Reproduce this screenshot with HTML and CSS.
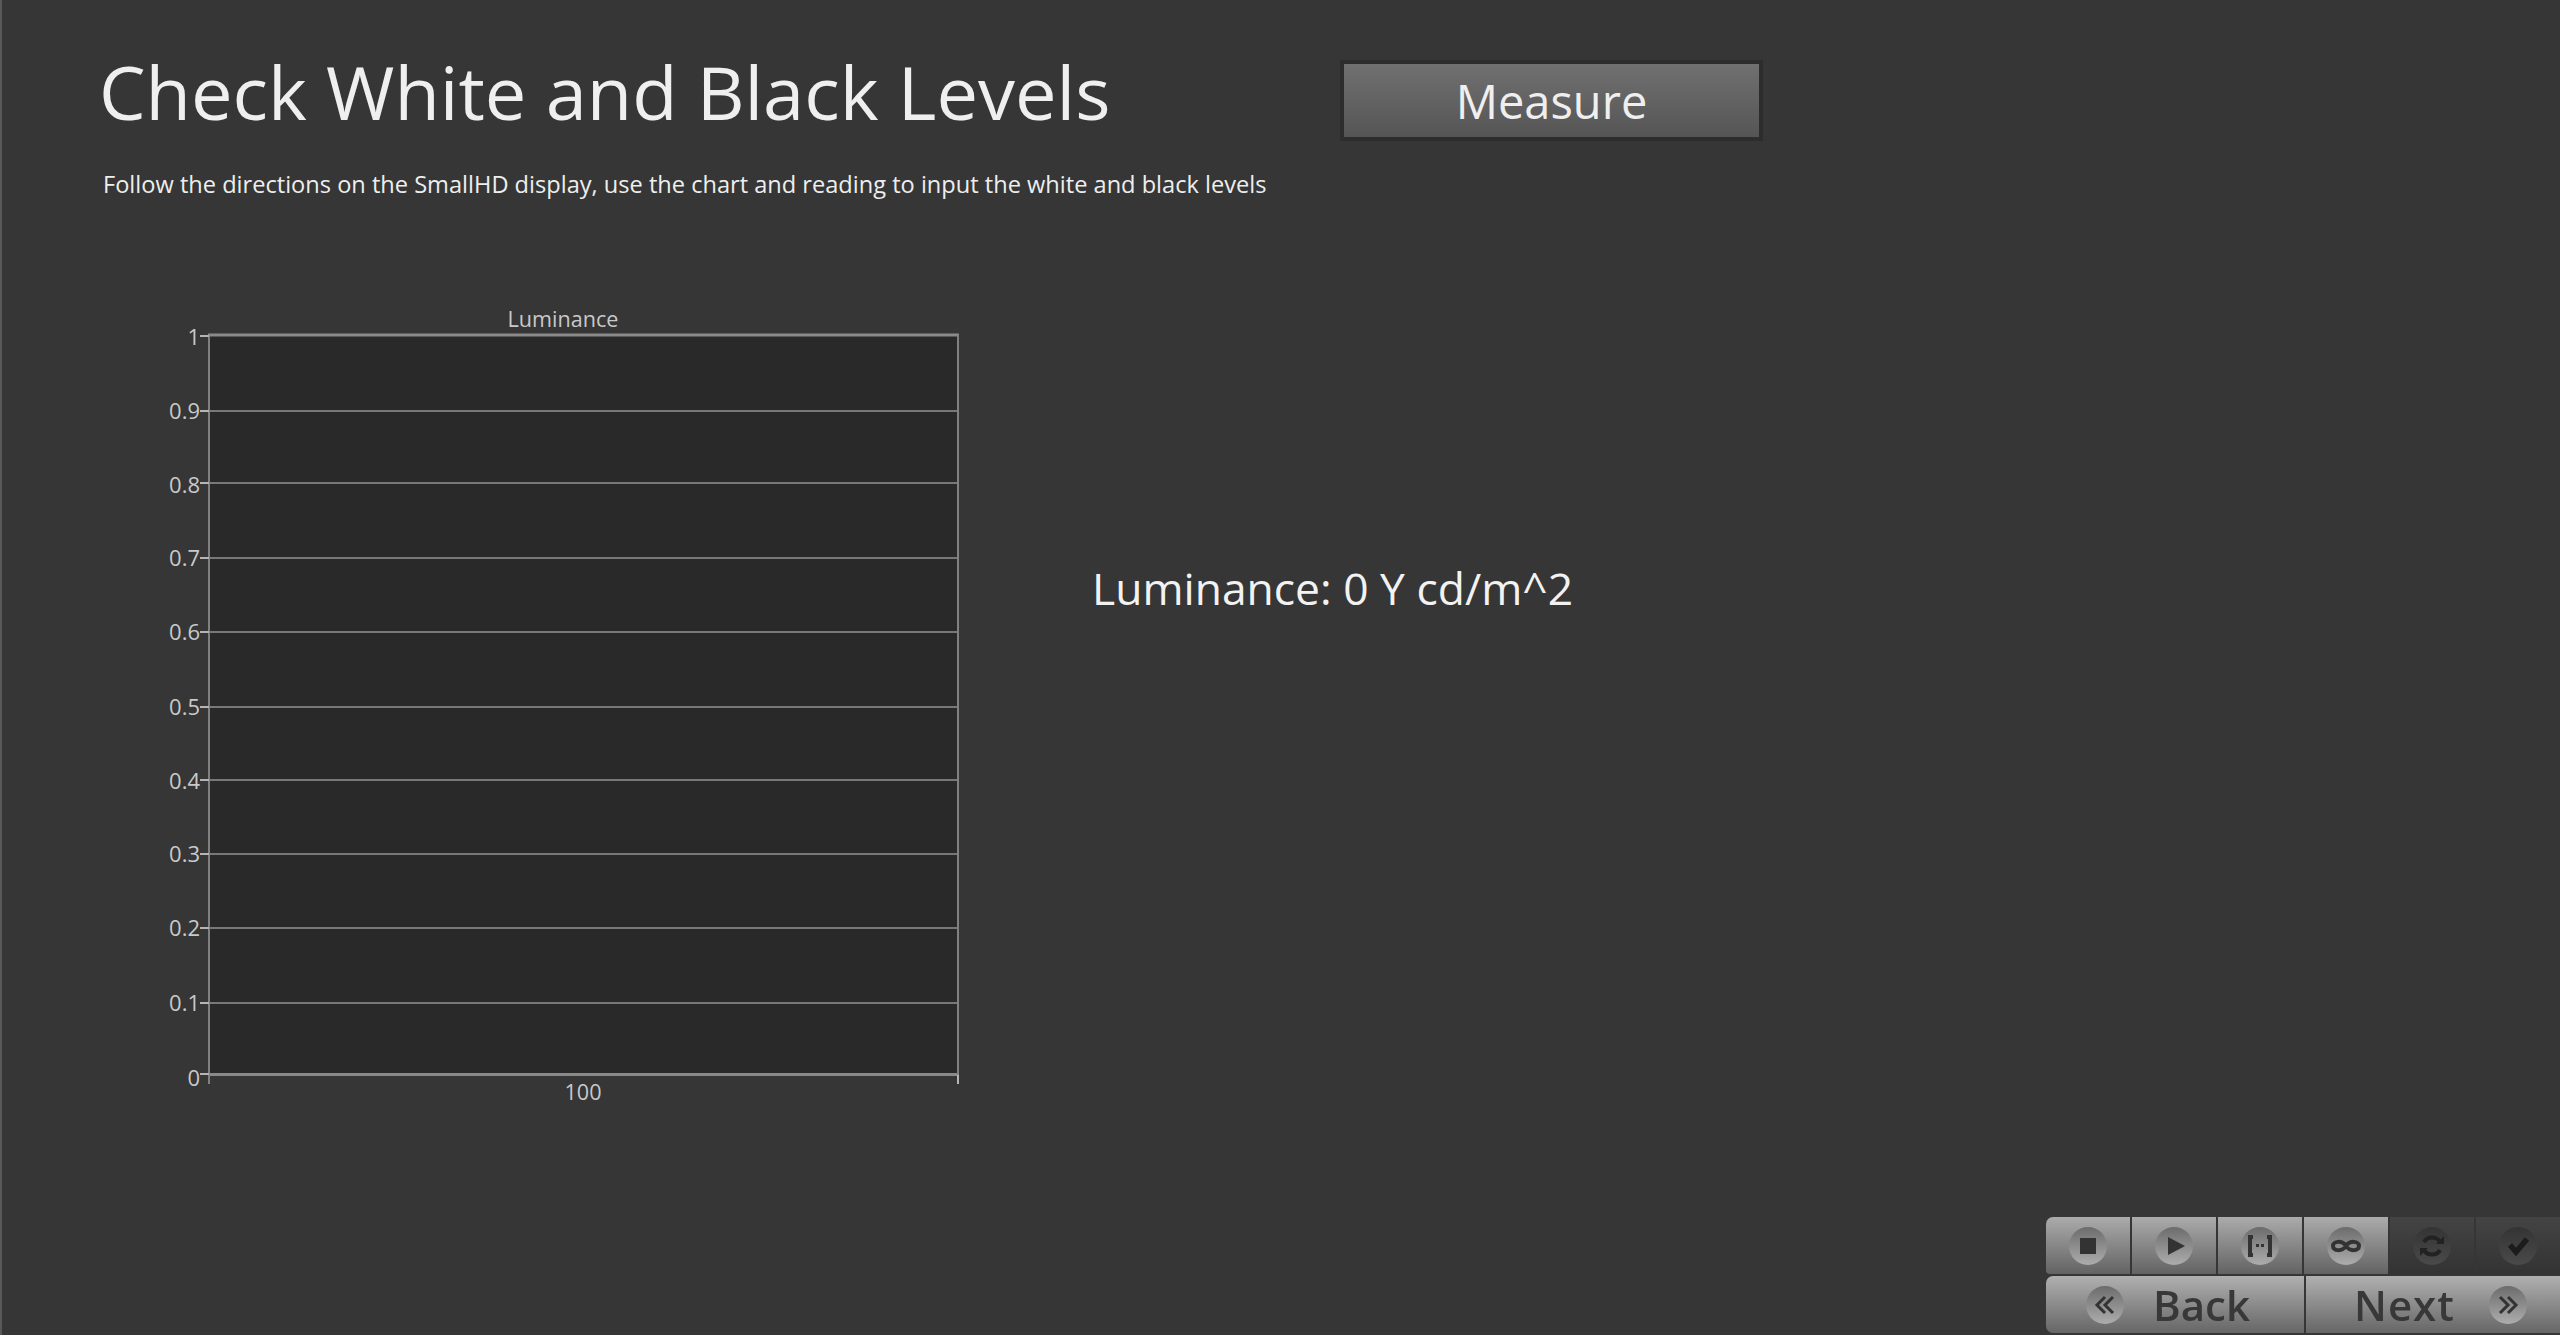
FILE: index.html
```html
<!DOCTYPE html>
<html lang="en">
<head>
<meta charset="utf-8">
<title>Check White and Black Levels</title>
<link rel="stylesheet" href="styles.css">
</head>
<body>
<main class="page">
  <header class="head">
    <h1 class="title">Check White and Black Levels</h1>
    <button class="measure" type="button">Measure</button>
  </header>
  <p class="desc">Follow the directions on the SmallHD display, use the chart and reading to input the white and black levels</p>
  <section class="content">
    <svg class="chart" viewBox="140 300 840 820" width="840" height="820" aria-label="Luminance chart">
      <rect class="plot" x="209" y="335" width="749" height="739"/>
      <g class="grid">
        <line x1="209" x2="958" y1="411" y2="411"/>
        <line x1="209" x2="958" y1="483" y2="483"/>
        <line x1="209" x2="958" y1="558" y2="558"/>
        <line x1="209" x2="958" y1="632" y2="632"/>
        <line x1="209" x2="958" y1="707" y2="707"/>
        <line x1="209" x2="958" y1="780" y2="780"/>
        <line x1="209" x2="958" y1="854" y2="854"/>
        <line x1="209" x2="958" y1="928" y2="928"/>
        <line x1="209" x2="958" y1="1003" y2="1003"/>
      </g>
      <g class="frame">
        <line class="thick" x1="208" x2="959" y1="335" y2="335"/>
        <line class="thick" x1="208" x2="959" y1="1074.5" y2="1074.5"/>
        <line x1="209" x2="209" y1="335" y2="1084"/>
        <line x1="958" x2="958" y1="335" y2="1074"/>
      </g>
      <g class="ticks">
        <line x1="200" x2="209" y1="336" y2="336"/>
        <line x1="200" x2="209" y1="411" y2="411"/>
        <line x1="200" x2="209" y1="483" y2="483"/>
        <line x1="200" x2="209" y1="558" y2="558"/>
        <line x1="200" x2="209" y1="632" y2="632"/>
        <line x1="200" x2="209" y1="707" y2="707"/>
        <line x1="200" x2="209" y1="780" y2="780"/>
        <line x1="200" x2="209" y1="854" y2="854"/>
        <line x1="200" x2="209" y1="928" y2="928"/>
        <line x1="200" x2="209" y1="1003" y2="1003"/>
        <line x1="200" x2="209" y1="1074" y2="1074"/>
        <line x1="958" x2="958" y1="1075" y2="1084"/>
      </g>
      <g class="ylabels">
        <text x="200" y="345">1</text>
        <text x="200" y="419">0.9</text>
        <text x="200" y="493">0.8</text>
        <text x="200" y="566">0.7</text>
        <text x="200" y="640">0.6</text>
        <text x="200" y="715">0.5</text>
        <text x="200" y="789">0.4</text>
        <text x="200" y="862">0.3</text>
        <text x="200" y="936">0.2</text>
        <text x="200" y="1011">0.1</text>
        <text x="200" y="1086">0</text>
      </g>
      <text class="ctitle" x="563" y="327">Luminance</text>
      <text class="ctitle" x="583" y="1100">100</text>
    </svg>
    <p class="reading">Luminance: 0 Y cd/m^2</p>
  </section>
  <nav class="toolbar">
    <div class="row tools">
      <div class="tool"><span class="knob"><svg viewBox="0 0 38 38"><rect x="11" y="11" width="16" height="16"/></svg></span></div>
      <div class="tool"><span class="knob"><svg viewBox="0 0 38 38"><path d="M13 10 L30 19 L13 28 Z"/></svg></span></div>
      <div class="tool"><span class="knob"><svg viewBox="0 0 38 38"><path class="st bold" d="M12 10 H9 V28 H12 M26 10 H29 V28 H26"/><rect x="15" y="17" width="3" height="3"/><rect x="20" y="17" width="3" height="3"/></svg></span></div>
      <div class="tool"><span class="knob"><svg viewBox="0 0 38 38"><path class="st bold" d="M19 19 C15 13 6 14 6 19 C6 24 15 25 19 19 C23 13 32 14 32 19 C32 24 23 25 19 19 Z"/></svg></span></div>
      <div class="tool off"><span class="knob"><svg viewBox="0 0 38 38"><path class="st bold" d="M27 15 C24 9 14 9 11 15 M11 23 C14 29 24 29 27 23"/><path d="M23 17 H31 V9 Z M15 21 H7 V29 Z"/></svg></span></div>
      <div class="tool off"><span class="knob"><svg viewBox="0 0 38 38"><path class="st check" d="M11 18 L17 25 L28 12"/></svg></span></div>
    </div>
    <div class="row navs">
      <a class="nav back"><span class="knob"><svg viewBox="0 0 38 38"><path class="st" d="M19 11 L11 19 L19 27 M27 11 L19 19 L27 27"/></svg></span>Back</a>
      <a class="nav next"><span class="next-label">Next</span><span class="knob"><svg viewBox="0 0 38 38"><path class="st" d="M11 11 L19 19 L11 27 M19 11 L27 19 L19 27"/></svg></span></a>
    </div>
  </nav>
</main>
</body>
</html>
```
FILE: styles.css
```css
* { box-sizing: border-box; }
html, body { margin: 0; padding: 0; }
body { background: #363636; font-family: "Open Sans", "Noto Sans", sans-serif; }
.page {
  width: 2560px;
  height: 1335px;
  overflow: hidden;
  border-left: 2px solid #585858;
  display: flex;
  flex-direction: column;
  color: #efefef;
}
.head { display: flex; align-items: flex-start; padding: 42px 0 0 97px; height: 140px; }
.title {
  flex: none;
  margin: 0;
  width: 1241px;
  font-size: 74px;
  line-height: 100px;
  font-weight: 400;
  color: #efefef;
}
.measure {
  margin-top: 18px;
  width: 423px;
  height: 81px;
  border: 4px solid #2d2d2d;
  background: linear-gradient(#707070, #555555);
  color: #efefef;
  font: 400 47px/70px "Open Sans", sans-serif;
  padding: 0;
}
.desc { margin: 26px 0 0 101px; height: 36px; font-size: 23.6px; line-height: 36px; color: #eeeeee; }
.content { display: flex; align-items: flex-start; padding: 0 0 0 138px; margin-top: 98px; height: 820px; }
.chart { flex: none; display: block; }
.plot { fill: #292929; }
.grid line { stroke: #787878; stroke-width: 2; }
.frame line { stroke: #808080; stroke-width: 2; }
.frame .thick { stroke: #8a8a8a; stroke-width: 3; }
.ticks line { stroke: #b5b5b5; stroke-width: 2; }
.ylabels text { font-size: 22px; fill: #c9c9c9; text-anchor: end; }
.ctitle { font-size: 21.6px; fill: #c9c9c9; text-anchor: middle; }
.reading { margin: 258px 0 0 112px; font-size: 44.4px; line-height: 60px; color: #f2f2f2; }
.toolbar {
  align-self: flex-end;
  width: 514px;
  margin-top: auto;
  margin-bottom: 2px;
  display: flex;
  flex-direction: column;
  gap: 2px;
  filter: blur(0.5px);
}
.row { display: flex; height: 57px; }
.tools { gap: 2px; }
.tool {
  flex: 1 1 0;
  display: flex;
  align-items: center;
  justify-content: center;
  background: linear-gradient(#ababab, #636363);
}
.tool:first-child { border-radius: 7px 0 0 4px; }
.tool.off { background: linear-gradient(#444444, #333333); }
.knob {
  width: 38px;
  height: 38px;
  border-radius: 50%;
  background: linear-gradient(#6c6c6c, #adadad);
  display: block;
  flex: none;
}
.off .knob { background: linear-gradient(#343434, #4a4a4a); }
.knob svg { display: block; width: 38px; height: 38px; fill: #333333; }
.off .knob svg { fill: #222222; }
.st { fill: none; stroke: #333333; stroke-width: 3; }
.st.bold { stroke-width: 4; }
.off .st { stroke: #222222; stroke-width: 4; }
.off .st.check { stroke: #1c1c1c; stroke-width: 5.5; }
.navs { gap: 2px; }
.nav {
  display: flex;
  align-items: center;
  background: linear-gradient(#b0b0b0, #666666);
  font-weight: 600;
  font-size: 42px;
  color: #383838;
}
.back { width: 258px; padding-left: 40px; gap: 29px; border-radius: 7px 0 0 7px; }
.next { flex: 1; padding-left: 48px; gap: 34px; }
.next-label { letter-spacing: 1px; }
```
